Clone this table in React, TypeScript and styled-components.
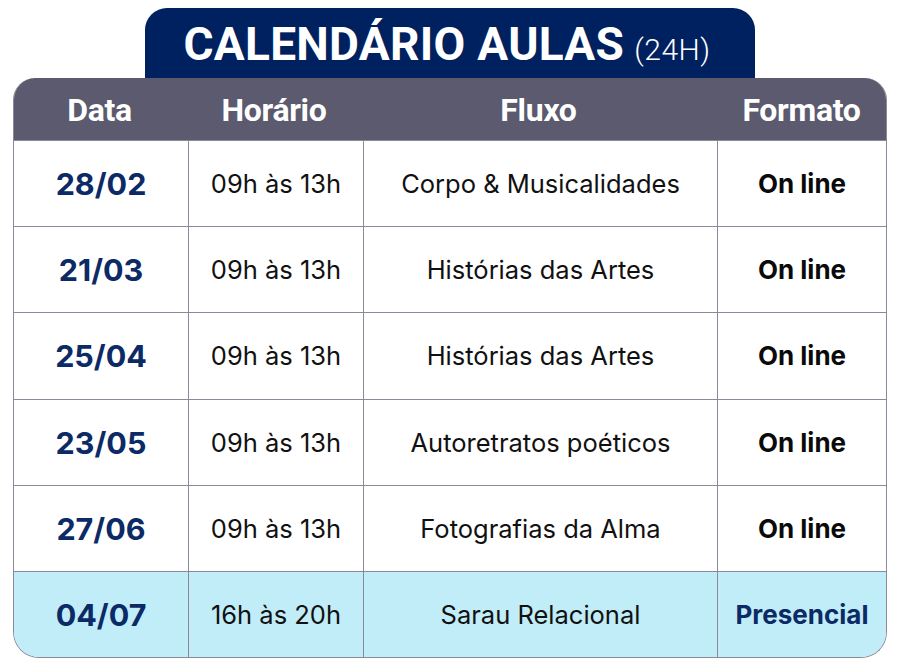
import styled, { createGlobalStyle } from "styled-components";

const GlobalStyle = createGlobalStyle`
    html, body {
        margin: 0;
        padding: 0;
        background: #ffffff;
    }
`;

interface RowProps {
    highlight?: boolean;
}

const aulas = [
    { data: '28/02', horario: '09h às 13h', fluxo: 'Corpo & Musicalidades', formato: 'On line' },
    { data: '21/03', horario: '09h às 13h', fluxo: 'Histórias das Artes', formato: 'On line' },
    { data: '25/04', horario: '09h às 13h', fluxo: 'Histórias das Artes', formato: 'On line' },
    { data: '23/05', horario: '09h às 13h', fluxo: 'Autoretratos poéticos', formato: 'On line' },
    { data: '27/06', horario: '09h às 13h', fluxo: 'Fotografias da Alma', formato: 'On line' },
    { data: '04/07', horario: '16h às 20h', fluxo: 'Sarau Relacional', formato: 'Presencial', presencial: true },
];

const App: React.FC = () => {
    return (
        <Page>
            <GlobalStyle />
            <TitleTab>
                <Title>CALENDÁRIO AULAS</Title>
                <Sub>(24H)</Sub>
            </TitleTab>
            <Table>
                <HeaderRow>
                    <HeadCell>Data</HeadCell>
                    <HeadCell>Horário</HeadCell>
                    <HeadCell>Fluxo</HeadCell>
                    <HeadCell>Formato</HeadCell>
                </HeaderRow>
                {aulas.map(aula => (
                    <Row key={aula.data} highlight={aula.presencial}>
                        <DateCell>{aula.data}</DateCell>
                        <Cell>{aula.horario}</Cell>
                        <Cell>{aula.fluxo}</Cell>
                        <FormatCell highlight={aula.presencial}>{aula.formato}</FormatCell>
                    </Row>
                ))}
            </Table>
        </Page>
    );
}

const Page = styled.div`
    width: 900px;
    height: 672px;
    padding: 8px 13px 0 13px;
    box-sizing: border-box;
    display: flex;
    flex-direction: column;
    align-items: center;
`;

const TitleTab = styled.div`
    width: 610px;
    height: 70px;
    box-sizing: border-box;
    background: #00215f;
    border-radius: 22px 22px 0 0;
    display: flex;
    justify-content: center;
    align-items: baseline;
    padding-top: 11px;
    padding-right: 6px;
    gap: 10px;
    font-family: 'Roboto', sans-serif;
    color: #ffffff;
`;

const Title = styled.span`
    font-size: 46px;
    font-weight: 700;
    letter-spacing: 0.3px;
    line-height: 50px;
`;

const Sub = styled.span`
    font-size: 30px;
    font-weight: 300;
    letter-spacing: 0.5px;
`;

const Table = styled.div`
    width: 874px;
    display: flex;
    flex-direction: column;
    border: 1.5px solid #8a8a9a;
    border-top: none;
    border-radius: 22px 22px 26px 26px;
    overflow: hidden;
    box-sizing: border-box;
    font-family: 'Inter', sans-serif;
`;

const grid = `
    display: grid;
    grid-template-columns: 174px 175px 354px 1fr;
`;

const HeaderRow = styled.div`
    ${grid}
    height: 62px;
    background: #5b5a6e;
    margin: 0 -1.5px;
`;

const HeadCell = styled.div`
    display: flex;
    justify-content: center;
    align-items: center;
    color: #ffffff;
    font-family: 'Roboto', sans-serif;
    font-weight: 700;
    font-size: 32px;
    letter-spacing: -0.3px;
    padding-top: 2px;
`;

const Row = styled.div<RowProps>`
    ${grid}
    height: 86.2px;
    background: ${props => props.highlight ? '#c1edf8' : '#ffffff'};
    border-top: 1.5px solid #8a8a9a;
    box-sizing: border-box;

    & > div + div {
        border-left: 1.5px solid #8a8a9a;
    }
`;

const Cell = styled.div`
    display: flex;
    justify-content: center;
    align-items: center;
    color: #111111;
    font-size: 25.5px;
    font-weight: 400;
`;

const DateCell = styled(Cell)`
    color: #0b2a66;
    font-size: 30.5px;
    font-weight: 700;
`;

const FormatCell = styled(Cell)<RowProps>`
    color: ${props => props.highlight ? '#0b2a66' : '#0a0a0a'};
    font-size: 26px;
    font-weight: 700;
`;

export default App;
